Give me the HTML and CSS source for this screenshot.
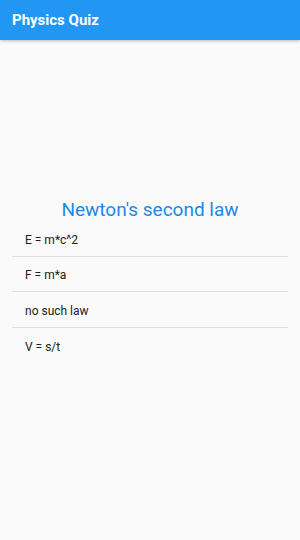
FILE: index.html
```html
<!DOCTYPE html>
<html>
<head>
<meta charset="utf-8">
<link rel="stylesheet" href="styles.css">
</head>
<body>
<header class="appbar"><span class="title">Physics Quiz</span></header>
<main class="content">
  <div class="quiz">
    <h1 class="question">Newton's second law</h1>
    <ul class="answers">
      <li class="answer">E = m*c^2</li>
      <li class="answer">F = m*a</li>
      <li class="answer">no such law</li>
      <li class="answer">V = s/t</li>
    </ul>
  </div>
</main>
</body>
</html>
```
FILE: styles.css
```css
html, body { margin: 0; padding: 0; }
body {
  width: 300px;
  height: 540px;
  background: #fafafa;
  font-family: Roboto, "Noto Sans", sans-serif;
  display: flex;
  flex-direction: column;
  overflow: hidden;
}
.appbar {
  height: 40px;
  background: #2196f3;
  display: flex;
  align-items: center;
  padding: 0 12px;
  box-shadow: 0 1px 3px rgba(0,0,0,0.25);
  flex: none;
}
.title {
  color: #fff;
  font-size: 15px;
  font-weight: 700;
}
.content {
  flex: 1;
  padding: 0 12px;
}
.quiz {
  padding-top: 159px;
}
.question {
  margin: 0;
  text-align: center;
  color: #1e88e5;
  font-size: 19px;
  font-weight: 400;
  line-height: 22px;
}
.answers {
  list-style: none;
  margin: 0;
  padding: 0;
}
.answer {
  height: 35.5px;
  box-sizing: border-box;
  display: flex;
  align-items: center;
  padding: 3px 13px 0;
  font-size: 12px;
  color: #212121;
  border-bottom: 1px solid #e0e0e0;
}
.answer:last-child { border-bottom: none; }
```
